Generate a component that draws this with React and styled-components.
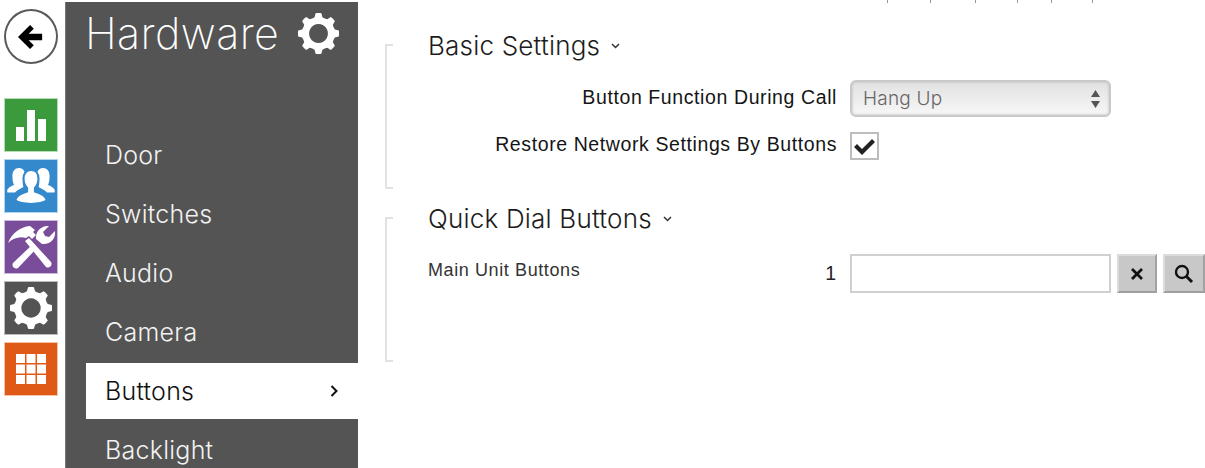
import React from "react";
import styled, { createGlobalStyle } from "styled-components";

const Global = createGlobalStyle`
  html, body { margin: 0; padding: 0; background: #fff; }
  body { font-family: Inter, "Liberation Sans", sans-serif; font-weight: 300; }
  * { box-sizing: border-box; }
`;

const Page = styled.div`
  display: flex; width: 1205px; height: 468px; overflow: hidden; background: #fff;
`;
const Rail = styled.aside`
  width: 65px; flex: none; display: flex; flex-direction: column; padding: 9px 0 0 4px;
`;
const BackButton = styled.div`
  width: 54px; height: 55px; border-radius: 50%; border: 2px solid #5a5a5a; background: #fff;
  display: flex; align-items: center; justify-content: center; margin-bottom: 34px;
`;
const TileList = styled.div`
  display: flex; flex-direction: column; gap: 7px;
`;
const Tile = styled.div`
  width: 54px; height: 54px; display: flex; align-items: center; justify-content: center;
  background: ${p => p.$bg}; border: 1px solid ${p => p.$edge};
`;
const Nav = styled.nav`
  width: 293px; flex: none; height: 466px; margin-top: 2px; background: #545454; color: #fff;
  border-left: 1px solid #777; display: flex; flex-direction: column; padding-left: 20px;
`;
const NavHeader = styled.div`
  display: flex; align-items: center; justify-content: space-between; height: 62px; padding-right: 19px;
`;
const NavTitle = styled.h1`
  margin: 0 0 0 -1px; font-size: 43px; font-weight: 200; line-height: 62px; letter-spacing: .4px;
`;
const NavList = styled.ul`
  list-style: none; margin: 63px 0 0; padding: 0; display: flex; flex-direction: column; gap: 3px;
`;
const NavItem = styled.li`
  height: 56px; display: flex; align-items: center; justify-content: space-between;
  padding: 0 20px 0 19px; font-size: 25px; font-weight: 300; letter-spacing: .25px;
  background: ${p => (p.$active ? "#fff" : "transparent")};
  color: ${p => (p.$active ? "#111" : "#f2f2f2")};
`;
const Main = styled.main`
  flex: 1; min-width: 0; display: flex; flex-direction: column; padding-left: 27px;
`;
const TopTicks = styled.div`
  height: 3px; display: flex; padding-left: 502px; margin-bottom: 41px;
`;
const Tick = styled.span`
  width: 1px; height: 3px; background: #999; margin-left: ${p => p.$gap}px;
`;
const Section = styled.section`
  display: flex; height: 145px; margin-bottom: 28px;
`;
const Bracket = styled.div`
  width: 8px; flex: none; border: 2px solid #e2e2e2; border-right: none;
`;
const SectionBody = styled.div`
  flex: 1; min-width: 0; padding-left: 35px; display: flex; flex-direction: column;
`;
const SectionTitle = styled.h2`
  margin: -14px 0 0; height: 32px; display: flex; align-items: center; gap: 11px;
  font-size: 26px; font-weight: 300; color: #1c1c1c; letter-spacing: .2px; line-height: 1;
`;
const Row = styled.div`
  display: grid; grid-template-columns: 409px auto; column-gap: 13px; align-items: center;
  margin-top: ${p => p.$top}px;
`;
const Label = styled.label`
  font-family: "Liberation Sans", Arial, sans-serif;
  font-size: 19.5px; font-weight: 400; color: #151515; text-align: right; letter-spacing: .6px; white-space: nowrap;
  margin-top: ${p => p.$shift}px;
`;
const Select = styled.div`
  width: 261px; height: 37px; border: 2px solid #c9c9c9; border-radius: 6px;
  box-shadow: inset 0 0 3px #bbb;
  background: linear-gradient(#e2e2e2, #f7f7f7);
  display: flex; align-items: center; justify-content: space-between; padding: 0 9px 0 11px;
  font-size: 19px; font-weight: 300; color: #666; letter-spacing: .2px;
`;
const Check = styled.div`
  width: 29px; height: 28px; border: 2px solid #bdbdbd; background: #fff;
  display: flex; align-items: center; justify-content: center;
`;
const QuickRow = styled.div`
  display: grid; grid-template-columns: 1fr auto 261px 46px 48px; align-items: center;
  margin-top: 19px; width: 777px;
`;
const SmallLabel = styled.span`
  font-family: "Liberation Sans", Arial, sans-serif;
  font-size: 18px; font-weight: 400; color: #333; letter-spacing: .6px; margin-top: -6px;
`;
const Num = styled.span`
  font-family: "Liberation Sans", Arial, sans-serif;
  font-size: 19.5px; font-weight: 400; color: #222; margin-right: 14px; margin-top: 0;
`;
const Input = styled.div`
  height: 39px; border: 2px solid #d0d0d0; background: #fff;
`;
const IconButton = styled.div`
  height: 39px; margin-left: 6px; background: #c8c8c8;
  border: 2px solid #dcdcdc; border-right-color: #a2a2a2; border-bottom-color: #9e9e9e;
  display: flex; align-items: center; justify-content: center;
`;

const gearPath = (() => {
  const n = 8, ro = 50, ri = 41, pts = [];
  for (let i = 0; i < n; i++) {
    const a = (i * 2 * Math.PI) / n - Math.PI / 2;
    const s = Math.PI / n;
    const p = (r, t) => `${(50 + r * Math.cos(t)).toFixed(2)} ${(50 + r * Math.sin(t)).toFixed(2)}`;
    pts.push(`${i ? "L" : "M"}${p(ri, a - s * 0.6)}`);
    pts.push(`L${p(ro, a - s * 0.36)}`);
    pts.push(`Q${p(ro + 1, a)} ${p(ro, a + s * 0.36)}`);
    pts.push(`L${p(ri, a + s * 0.6)}`);
    pts.push(`Q${p(ri - 2, a + s)} ${p(ri, a + s * 1.4)}`);
  }
  return pts.join(" ") + "Z M50 27a23 23 0 1 0 .01 0Z";
})();

const Gear = ({ size }) => (
  <svg width={size} height={size} viewBox="0 0 100 100" aria-hidden="true">
    <path d={gearPath} fill="#fff" fillRule="evenodd" />
  </svg>
);

const BackArrow = () => (
  <svg width="28" height="26" viewBox="0 0 30 28" aria-hidden="true">
    <path d="M14 1 L1 14 L14 27 L18 23 L12.5 17.5 H27 V10.5 H12.5 L18 5 Z" fill="#000" />
  </svg>
);
const Bars = () => (
  <svg width="30" height="31" viewBox="0 0 30 31" aria-hidden="true">
    <path d="M0 17h8v14H0zM11 0h8v31h-8zM22 9h8v22h-8z" fill="#fff" />
  </svg>
);
const People = () => (
  <svg width="48" height="38" viewBox="0 0 48 38" aria-hidden="true">
    <g fill="#fff">
      <path d="M12 1c4 0 6 3 6 7 0 .8 0 1.6-.2 2.400-2 2.600-2.600 6-1.400 9.600-3 1.600-6 3-8.400 5.500H.5C-1 22 3 19.500 7 18c-1-2-1.600-5-1.600-9C5.400 4 8 1 12 1Z" />
      <path d="M36 1c-4 0-6 3-6 7 0 .8 0 1.600.2 2.400 2 2.600 2.600 6 1.400 9.600 3 1.600 6 3 8.400 5.500h7.500c1.500-3.500-2.500-6-6.500-7.500 1-2 1.600-5 1.600-9C42.600 4 40 1 36 1Z" />
      <path d="M24 3c5 0 7.500 4 7.500 8.500 0 4-1.500 7.500-3.500 9.500v3.500c5 1.500 11 4 12 9-4 2.500-10 3.500-16 3.500s-12-1-16-3.500c1-5 7-7.500 12-9V21c-2-2-3.500-5.500-3.500-9.500C16.500 7 19 3 24 3Z" stroke="#3389cc" strokeWidth="2.200" />
    </g>
  </svg>
);
const Tools = () => (
  <svg width="50" height="50" viewBox="0 0 50 50" aria-hidden="true">
    <g fill="#fff">
      <path d="M2 21 C6 11 14 5 24 4 L29 8 L27 10 L30 13 L26 17 L23 14 L20 16 C14 14 7 16 2 21Z" />
      <path d="M19 19 L23 16 L45 40 C47 43 43 47 40 45Z" />
      <path d="M7 41 L27 22 L31 26 L12 46 C9 48 5 44 7 41Z" />
      <path d="M30 17 C29 10 35 3 43 4 L37 10 L39 14 L43 15 L49 9 C50 17 44 23 36 22Z" />
    </g>
  </svg>
);
const Grid = () => (
  <svg width="30" height="30" viewBox="0 0 30 30" aria-hidden="true">
    <path fill="#fff" d="M0 0h9v9H0zM10.500 0h9v9h-9zM21 0h9v9h-9zM0 10.500h9v9H0zM10.500 10.500h9v9h-9zM21 10.500h9v9h-9zM0 21h9v9H0zM10.500 21h9v9h-9zM21 21h9v9h-9z" />
  </svg>
);
const Chevron = () => (
  <svg width="8" height="12" viewBox="0 0 8 12" aria-hidden="true">
    <path d="M1.500 1 L6.500 6 L1.500 11" fill="none" stroke="#111" strokeWidth="2" />
  </svg>
);
const Caret = () => (
  <svg width="9" height="6" viewBox="0 0 9 6" aria-hidden="true">
    <path d="M1 1 L4.500 4.500 L8 1" fill="none" stroke="#333" strokeWidth="1.500" />
  </svg>
);
const Updown = () => (
  <svg width="9" height="18" viewBox="0 0 9 18" aria-hidden="true">
    <path d="M4.500 0 L9 7 H0Z M0 11 H9 L4.500 18Z" fill="#555" />
  </svg>
);
const Tickmark = () => (
  <svg width="21" height="17" viewBox="0 0 21 17" aria-hidden="true">
    <path d="M0 9 L3 6 L8 11 L18 1 L21 4 L8 17 Z" fill="#222" />
  </svg>
);
const Cross = () => (
  <svg width="12" height="12" viewBox="0 0 12 12" aria-hidden="true">
    <path d="M1 1 L11 11 M11 1 L1 11" stroke="#111" strokeWidth="2.800" />
  </svg>
);
const Search = () => (
  <svg width="20" height="20" viewBox="0 0 20 20" aria-hidden="true">
    <circle cx="8" cy="8" r="6" fill="none" stroke="#111" strokeWidth="2.400" />
    <path d="M12.500 12.500 L18 18" stroke="#111" strokeWidth="3" />
  </svg>
);

const items = ["Door", "Switches", "Audio", "Camera", "Buttons", "Backlight"];
const tickGaps = [0, 42, 44, 41, 33, 40];

export default function App() {
  return (
    <Page>
      <Global />
      <Rail>
        <BackButton><BackArrow /></BackButton>
        <TileList>
          <Tile $bg="#3a9a3c" $edge="#b5dcb5"><Bars /></Tile>
          <Tile $bg="#3389cc" $edge="#b2d5ee"><People /></Tile>
          <Tile $bg="#7a4d9b" $edge="#cdb9da"><Tools /></Tile>
          <Tile $bg="#545454" $edge="#bbb"><Gear size={42} /></Tile>
          <Tile $bg="#e05a17" $edge="#f4c2a5"><Grid /></Tile>
        </TileList>
      </Rail>
      <Nav>
        <NavHeader>
          <NavTitle>Hardware</NavTitle>
          <Gear size={41} />
        </NavHeader>
        <NavList>
          {items.map(item => (
            <NavItem key={item} $active={item === "Buttons"}>
              {item}
              {item === "Buttons" && <Chevron />}
            </NavItem>
          ))}
        </NavList>
      </Nav>
      <Main>
        <TopTicks>{tickGaps.map((g, i) => <Tick key={i} $gap={g} />)}</TopTicks>
        <Section>
          <Bracket />
          <SectionBody>
            <SectionTitle>Basic Settings <Caret /></SectionTitle>
            <Row $top={18}>
              <Label $shift={-3}>Button Function During Call</Label>
              <Select>Hang Up <Updown /></Select>
            </Row>
            <Row $top={15}>
              <Label $shift={-4}>Restore Network Settings By Buttons</Label>
              <Check><Tickmark /></Check>
            </Row>
          </SectionBody>
        </Section>
        <Section>
          <Bracket />
          <SectionBody>
            <SectionTitle>Quick Dial Buttons <Caret /></SectionTitle>
            <QuickRow>
              <SmallLabel>Main Unit Buttons</SmallLabel>
              <Num>1</Num>
              <Input />
              <IconButton><Cross /></IconButton>
              <IconButton><Search /></IconButton>
            </QuickRow>
          </SectionBody>
        </Section>
      </Main>
    </Page>
  );
}
